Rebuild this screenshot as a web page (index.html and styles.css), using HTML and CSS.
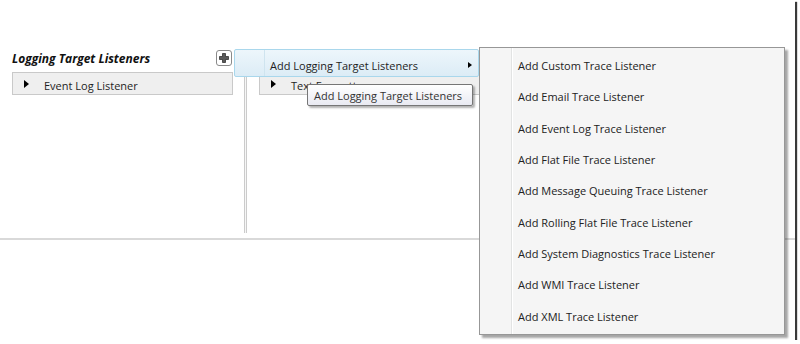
FILE: index.html
```html
<!DOCTYPE html>
<html lang="en">
<head>
    <meta charset="UTF-8">
    <title>Logging Target Listeners</title>
    <link rel="stylesheet" href="styles.css">
</head>
<body>

    <div class="frame">
        <div class="designer">
            <div class="column col-left">
                <div class="column-header">
                    <span class="column-title">Logging Target Listeners</span>
                    <span class="add-button">
                        <svg width="10" height="10" viewBox="0 0 10 10">
                            <path d="M3.5 0.5h3v3h3v3h-3v3h-3v-3h-3v-3h3z" fill="#5a5a5a" stroke="#222" stroke-width="0.7"/>
                        </svg>
                    </span>
                </div>
                <div class="tree-row">
                    <span class="expander"></span>
                    <span class="row-label">Event Log Listener</span>
                </div>
            </div>

            <div class="splitter"></div>

            <div class="column col-right">
                <div class="tree-row">
                    <span class="expander"></span>
                    <span class="row-label">Text Formatter</span>
                </div>
            </div>
        </div>

        <div class="context-menu">
            <div class="menu-item highlighted">
                <span class="icon-col"></span>
                <span class="item-text">Add Logging Target Listeners</span>
                <span class="sub-arrow"></span>
            </div>
        </div>

        <div class="tooltip">Add Logging Target Listeners</div>

        <div class="submenu">
            <div class="sub-item">Add Custom Trace Listener</div>
            <div class="sub-item">Add Email Trace Listener</div>
            <div class="sub-item">Add Event Log Trace Listener</div>
            <div class="sub-item">Add Flat File Trace Listener</div>
            <div class="sub-item">Add Message Queuing Trace Listener</div>
            <div class="sub-item">Add Rolling Flat File Trace Listener</div>
            <div class="sub-item">Add System Diagnostics Trace Listener</div>
            <div class="sub-item">Add WMI Trace Listener</div>
            <div class="sub-item">Add XML Trace Listener</div>
        </div>
    </div>

</body>
</html>
```

FILE: styles.css
```css
body {
    margin: 0;
    background: #fff;
    font-family: "Open Sans", "Noto Sans", sans-serif;
    font-size: 11px;
    color: #1e1e1e;
}
.frame {
    position: relative;
    width: 795px;
    height: 340px;
    background: #fff;
    box-shadow: 2px 2px 1px #3a3a3a;
}
.designer {
    display: flex;
    height: 238px;
    border-bottom: 2px solid #d9d9d9;
}
.col-left {
    width: 221px;
    padding: 49px 0 0 12px;
}
.column-header {
    display: flex;
    justify-content: space-between;
    align-items: center;
    height: 17px;
    padding-right: 1px;
}
.column-title {
    font-size: 12px;
    font-weight: bold;
    font-style: italic;
    color: #111;
    line-height: 17px;
    padding-top: 1px;
}
.add-button {
    display: flex;
    align-items: center;
    justify-content: center;
    width: 14px;
    height: 14px;
    border: 1px solid #8a8a8a;
    border-radius: 3px;
    background: #fff;
}
.tree-row {
    display: flex;
    align-items: center;
    height: 21px;
    margin-top: 6px;
    padding-left: 11px;
    background: #efefef;
    border: 1px solid #c9c9c9;
}
.expander {
    width: 0;
    height: 0;
    border-left: 5px solid #000;
    border-top: 4px solid transparent;
    border-bottom: 4px solid transparent;
    margin-right: 15px;
}
.row-label {
    line-height: 21px;
    padding-top: 4px;
}
.splitter {
    width: 1px;
    margin: 50px 0 5px 11px;
    border-left: 1px solid #cbcbcb;
    border-right: 1px solid #cbcbcb;
    background: #f6f6f6;
}
.col-right {
    width: 300px;
    padding: 49px 0 0 12px;
}
.col-right .tree-row {
    margin-top: 23px;
}

/* popups */
.context-menu {
    position: absolute;
    left: 234px;
    top: 49px;
    width: 245px;
}
.menu-item {
    display: flex;
    align-items: center;
    height: 26px;
    border: 1px solid transparent;
    border-radius: 2px;
}
.menu-item.highlighted {
    background: linear-gradient(#edf6fb, #dcecf6);
    border-color: #a9d7ec;
}
.icon-col {
    width: 29px;
    height: 100%;
    border-right: 1px solid #cfe4ef;
}
.item-text {
    flex: 1;
    padding: 5px 0 0 5px;
}
.sub-arrow {
    width: 0;
    height: 0;
    border-left: 4px solid #000;
    border-top: 3.5px solid transparent;
    border-bottom: 3.5px solid transparent;
    margin: 3px 6px 0 0;
}
.tooltip {
    position: absolute;
    left: 307px;
    top: 84px;
    width: 158px;
    height: 20px;
    padding-left: 6px;
    line-height: 21px;
    border: 1px solid #767676;
    border-radius: 2px;
    background: linear-gradient(#ffffff, #e9eaf2);
    box-shadow: 2px 2px 2px rgba(0, 0, 0, 0.3);
    color: #333;
}
.submenu {
    position: absolute;
    left: 479px;
    top: 47px;
    width: 304px;
    padding: 2px 0;
    background: #f5f5f5 linear-gradient(to right, #f5f5f5 31px, #e2e3e3 31px, #e2e3e3 32px, #fff 32px, #fff 33px, #f5f5f5 33px);
    border: 1px solid #979797;
    box-shadow: 3px 3px 2px rgba(0, 0, 0, 0.35);
}
.sub-item {
    height: 31.33px;
    line-height: 31px;
    padding-left: 38px;
    color: #222;
}
```
